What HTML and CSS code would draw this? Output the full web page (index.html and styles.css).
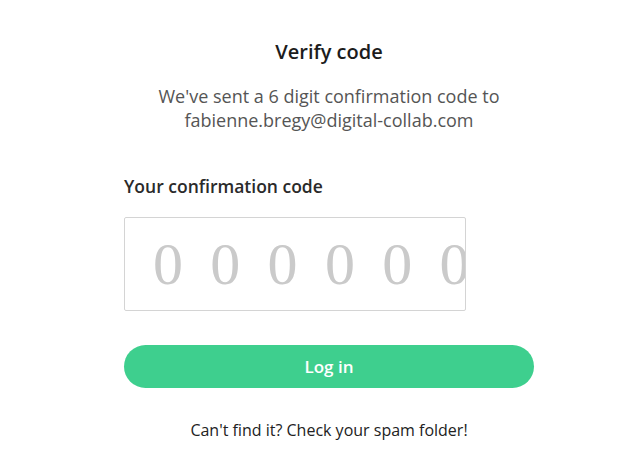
FILE: index.html
```html
<!DOCTYPE html>
<html lang="en">
<head>
  <meta charset="UTF-8">
  <title>Verify code</title>
  <meta name="viewport" content="width=device-width, initial-scale=1.0">
  <link rel="stylesheet" href="styles.css">
</head>
<body>
  <section class="verify">
    <h2>Verify code</h2>
    <p class="sent">We've sent a 6 digit confirmation code to<br>fabienne.bregy@digital-collab.com</p>

    <form class="code-form">
      <label for="code">Your confirmation code</label>
      <input type="text" id="code" name="code" maxlength="6" placeholder="000000">
      <button type="submit">Log in</button>
    </form>

    <p class="spam">Can't find it? Check your spam folder!</p>
  </section>
</body>
</html>
```

FILE: styles.css
```css
* {
  margin: 0;
  padding: 0;
  box-sizing: border-box;
}
body {
  background: #ffffff;
  font-family: 'Open Sans', sans-serif;
  color: #1f1f1f;
}
.verify {
  width: 410px;
  margin-left: 124px;
  padding-top: 38px;
}
.verify h2 {
  font-size: 20px;
  font-weight: 600;
  text-align: center;
  line-height: 28px;
  color: #1c1c1c;
}
.sent {
  margin-top: 18px;
  text-align: center;
  font-size: 18px;
  line-height: 24px;
  color: #555555;
}
.code-form {
  display: flex;
  flex-direction: column;
}
label {
  margin-top: 42px;
  font-size: 17.5px;
  font-weight: 600;
  line-height: 24px;
  color: #2a2a2a;
}
input {
  margin-top: 19px;
  width: 342px;
  height: 94px;
  padding: 0 0 0 28px;
  border: 1px solid #d4d4d4;
  border-radius: 2px;
  font-family: 'Liberation Serif', serif;
  font-size: 60px;
  letter-spacing: 27.3px;
  color: #999999;
  outline: none;
}
input::placeholder {
  color: #cacaca;
}
button[type="submit"] {
  margin-top: 34px;
  height: 43px;
  border: none;
  border-radius: 22px;
  background: #3ecf8e;
  color: #ffffff;
  font-family: 'Open Sans', sans-serif;
  font-size: 17px;
  font-weight: 600;
  cursor: pointer;
}
.spam {
  margin-top: 31px;
  text-align: center;
  font-size: 16px;
  line-height: 22px;
  color: #222222;
}
```
